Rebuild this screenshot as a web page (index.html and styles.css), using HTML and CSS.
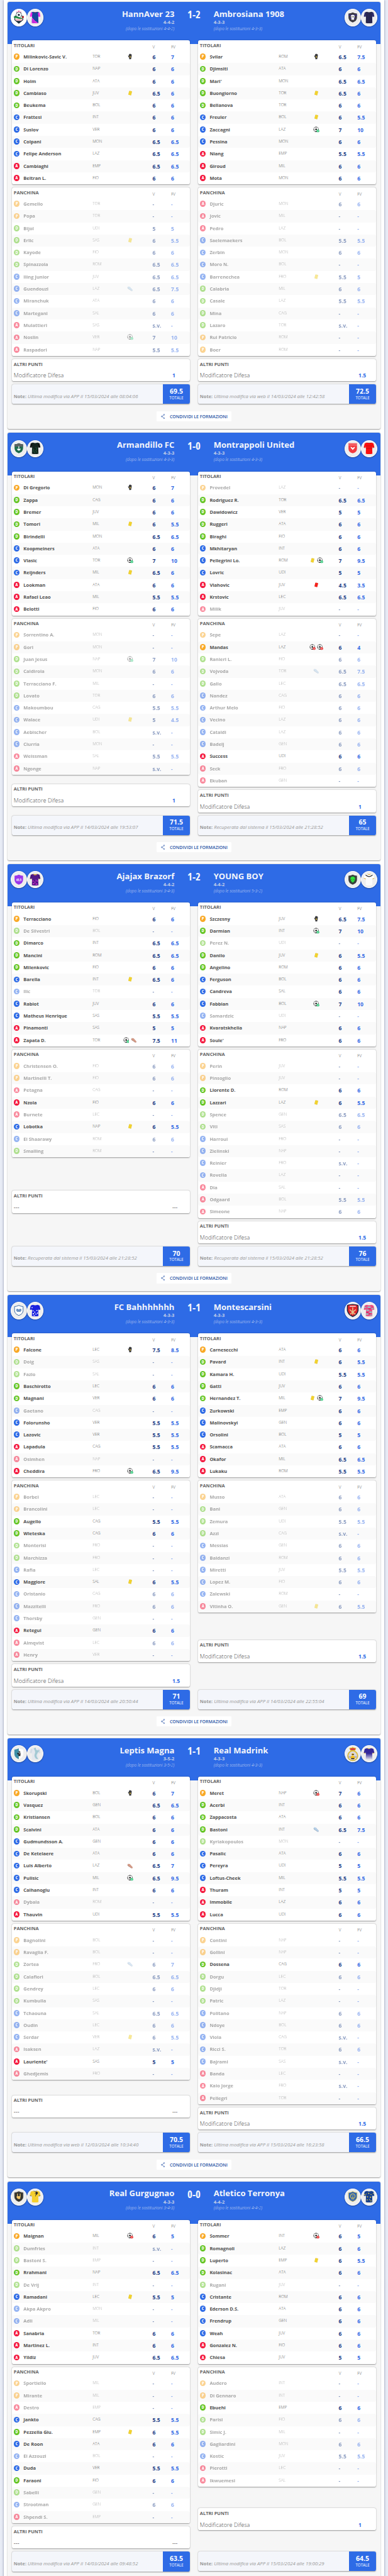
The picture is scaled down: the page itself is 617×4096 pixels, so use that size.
FILE: index.html
```html
<!DOCTYPE html>
<html lang="it">
<head>
<meta charset="utf-8">
<title>Formazioni</title>
<link rel="stylesheet" href="styles.css">
</head>
<body>
<svg class="defs" aria-hidden="true">
  <symbol id="glove" viewBox="0 0 16 16"><path d="M4 9 2.6 6.4c-.4-1 .8-1.6 1.4-.8l1 1.2-.3-4c0-1.100 1.400-1.200 1.600-.2l.6-1.400c.5-.9 1.600-.6 1.600.3l.5-.3c.8-.4 1.500 0 1.400.9l.3.2c.8-.2 1.300.4 1.200 1.200L11.500 8.500 10.500 12v2.500l-4.500.3-.5-3z" fill="#3a3a3c"/><circle cx="8" cy="8.800" r="1.700" fill="#e8c53a"/></symbol>
  <symbol id="yellow" viewBox="0 0 16 16"><rect x="4.300" y="2.700" width="7.400" height="10.600" rx="1.200" transform="rotate(13 8 8)" fill="#f2d22e"/></symbol>
  <symbol id="red" viewBox="0 0 16 16"><rect x="4.300" y="2.700" width="7.400" height="10.600" rx="1.200" transform="rotate(13 8 8)" fill="#f5221c"/></symbol>
  <symbol id="ball" viewBox="0 0 16 16"><circle cx="7.500" cy="7.500" r="6.300" fill="#fff" stroke="#333" stroke-width=".8"/><path d="m7.500 4.900 2.500 1.800-1 2.900H6L5 6.700zM4.700 1.800 7.500 3l2.800-1.200A6.500 6.500 0 0 0 4.700 1.800zM1.200 6.400 3 8l-.4 3A6.500 6.500 0 0 1 1.200 6.400zM13.800 6.400 12 8l.4 3a6.500 6.500 0 0 0 1.400-4.600zM5 13.500l1.200-1.700h2.600l1.200 1.700a6.500 6.500 0 0 1-5 0z" fill="#2b2b2b"/></symbol>
  <symbol id="goal" viewBox="0 0 16 16"><use href="#ball"/><circle cx="12.200" cy="11.500" r="3.500" fill="#3fcf85"/><path d="m10.600 11.600 1.200 1.100 2-2.300" fill="none" stroke="#fff" stroke-width="1"/></symbol>
  <symbol id="conceded" viewBox="0 0 16 16"><use href="#ball"/><circle cx="12.200" cy="11.500" r="3.500" fill="#ee2d2d"/><path d="m10.800 10.100 2.800 2.800m0-2.800-2.800 2.800" stroke="#fff" stroke-width="1"/></symbol>
  <symbol id="assist" viewBox="0 0 16 16"><path d="M1.500 4.500 3 2.500l1.800.9 2-.6 7.600 8.400-.3 2.300-2.300.2L6 9.700 2.600 7.800z" fill="#b4cfe8"/><path d="m1.600 4.700 1 3.200L6 9.800l5.800 4" fill="none" stroke="#7d97b0" stroke-width=".8"/></symbol>
  <symbol id="softassist" viewBox="0 0 16 16"><path d="M1.500 4.500 3 2.500l1.800.9 2-.6 7.600 8.400-.3 2.300-2.300.2L6 9.700 2.600 7.800z" fill="#d59a86"/><path d="m1.600 4.700 1 3.200L6 9.800l5.800 4" fill="none" stroke="#9b6656" stroke-width=".8"/></symbol>
  <symbol id="share" viewBox="0 0 12 16"><path d="M9.500 3 2.800 8l6.700 5" fill="none" stroke="#2f58a8" stroke-width="1.100"/><g fill="#b9c8e6" stroke="#2f58a8" stroke-width=".9"><circle cx="9.500" cy="2.600" r="1.800"/><circle cx="2.600" cy="8" r="1.800"/><circle cx="9.500" cy="13.400" r="1.800"/></g></symbol>
</svg>
<main class="page" id="matches"></main>
<script src="matches.js"></script>
</body>
</html>
```
FILE: styles.css
```css
/* 1rem = 10 design pixels */
html { font-size: 6.228px; }
* { box-sizing: border-box; }
body {
  margin: 0;
  height: 4096px;
  overflow: hidden;
  background: #e8ecf6;
  font-family: "Open Sans", "Noto Sans", sans-serif;
  color: #505050;
}
.defs { position: absolute; width: 0; height: 0; }
.page {
  display: flex;
  flex-direction: column;
  gap: 1rem;
  margin: 0 1rem;
  padding: .5rem 1rem 0;
  min-height: 4096px;
  background: #fff;
  box-shadow: 0 0 .5rem rgba(40, 50, 90, .55);
}

.match {
  flex: none;
  display: flex;
  flex-direction: column;
  border-radius: .5rem;
  background: #f6f6f6;
  box-shadow: 0 .1rem .3rem rgba(0, 0, 0, .4);
}
.match.last { padding-bottom: 3rem; }

.match-head {
  flex: none;
  display: grid;
  grid-template-columns: 1fr 10rem 1fr;
  height: 10.8rem;
  padding: 0 .8rem;
  border-radius: .5rem .5rem 0 0;
  background: #2e6be6;
  color: #f3f5fb;
}
.club { display: flex; justify-content: space-between; }
.club.away { flex-direction: row-reverse; }
.club.home .club-text { text-align: right; }
.club-text { padding-top: 1.6rem; white-space: nowrap; }
.club-name { font-size: 2.1rem; line-height: 2.9rem; font-weight: 700; }
.module { font-size: 1.2rem; line-height: 1.5rem; font-weight: 700; color: #c3cfe8; }
.module-after { margin-top: .1rem; font-size: 1.09rem; line-height: 1.6rem; font-style: italic; font-weight: 300; color: #d5def2; }
.score {
  padding-top: 1.3rem;
  text-align: center;
  font-size: 2.7rem;
  line-height: 3.8rem;
  font-weight: 700;
  font-stretch: 75%;
}
.badges { display: flex; padding-top: 1.8rem; }
.badge {
  width: 4.15rem;
  height: 4.4rem;
  border-radius: 50%;
  background: #eee;
  border: .2rem solid #fff;
  box-shadow: 0 .1rem .3rem rgba(0, 0, 0, .45);
  overflow: hidden;
}
.badge.white { background: #fff; }
.badge svg { display: block; width: 4.15rem; height: 4.4rem; margin: -.2rem; }

.teams {
  display: flex;
  gap: 2rem;
  margin-top: -1rem;
  padding: 0 1rem;
}
.team { flex: 1 1 0; min-width: 0; display: flex; flex-direction: column; gap: .8rem; }
.panel {
  flex: none;
  border-radius: .5rem;
  background: #fff;
  box-shadow: 0 .1rem .3rem rgba(0, 0, 0, .38);
}
.panel-title { font-size: 1.19rem; line-height: 1.8rem; font-weight: 700; color: #646464; white-space: nowrap; }
.line {
  display: grid;
  grid-template-columns: 2.5rem 17.65rem 6rem 9.3rem 4.75rem 1fr;
  padding-left: .5rem;
  height: 3.1rem;
  border-radius: .5rem;
}
.line.head { height: 2.7rem; padding-top: .4rem; grid-template-columns: 35.45rem 4.75rem 1fr; }
.col { font-size: 1.03rem; line-height: 2.5rem; font-weight: 300; }
.line:nth-child(odd) { background: #fafafa; }
.line.head:nth-child(odd) { background: none; }
.line.off > * { opacity: .5; }

.role {
  width: 1.55rem;
  height: 1.55rem;
  margin-top: .7rem;
  border-radius: 50%;
  color: #fff;
  font-size: 1.2rem;
  line-height: 1.55rem;
  font-weight: 700;
  font-stretch: 75%;
  text-align: center;
}
.role.P { background: #f9a825; }
.role.D { background: #64c524; }
.role.C { background: #2e6be6; }
.role.A { background: #f4173d; }
.player { font-size: 1.2rem; line-height: 3.1rem; font-weight: 700; white-space: nowrap; }
.side { font-size: 1.03rem; line-height: 2.75rem; font-weight: 300; }
.bonus { display: flex; justify-content: center; gap: .4rem; padding: .65rem 2.2rem 0 0; }
.bonus svg { flex: none; width: 1.6rem; height: 1.6rem; filter: drop-shadow(.1rem .1rem .1rem rgba(0, 0, 0, .2)); }
.vote { font-size: 1.37rem; line-height: 3.28rem; font-weight: 700; color: #1a3c85; }
.vote.final { color: #3068e4; }

.extra { margin: auto 0; height: 5.7rem; padding: .45rem 0 0 .5rem; }
.extra-line {
  display: grid;
  grid-template-columns: 40.5rem 1fr;
  padding-top: .9rem;
  font-size: 1.47rem;
  line-height: 2.2rem;
  font-weight: 300;
  white-space: nowrap;
}
.extra-line b { font-size: 1.37rem; font-weight: 700; color: #2e6be6; }
.extra-line.none { font-weight: 400; }
.extra-line.none b { font-weight: 400; color: #505050; }

.total { display: flex; height: 5rem; background: #f4f6fb; overflow: hidden; }
.note { flex: 1; padding: 2rem 0 0 .5rem; font-size: 1.25rem; line-height: 2.23rem; color: #999; white-space: nowrap; }
.note b { font-size: 1.19rem; }
.sum { width: 7rem; padding-top: .6rem; background: #2e6be6; color: #fff; text-align: center; font-size: 1rem; line-height: .8rem; }
.sum b { display: block; font-size: 1.68rem; line-height: 2.35rem; }

.share {
  flex: none;
  display: flex;
  align-items: center;
  align-self: center;
  gap: 1.2rem;
  width: 19.2rem;
  height: 2.6rem;
  margin: 1.8rem 0 2rem;
  padding-left: 1.2rem;
  border-radius: .2rem;
  background: #fff;
  color: #2a55a5;
  font-size: 1.13rem;
  font-weight: 600;
  white-space: nowrap;
}
.share svg { width: 1rem; height: 1.35rem; }
```
FILE: matches.js
```js
// Player line: role, name, club, vote, final vote, bonus icons.
// A leading "*" flips the default state (starters count, bench players do not).
const ICONS = { g: 'glove', y: 'yellow', r: 'red', b: 'goal', o: 'conceded', s: 'assist', t: 'softassist' };

const shirt = (fill, sleeve, extra = '') => `
  <path fill="${fill}" d="M15 7.500Q21 10 27 7.500L32 9.500 29 19l.5 17.300Q21 38 12.500 36.300L13 19 10 9.500Z"/>
  <path fill="${sleeve}" d="M12 8.600 9.500 10 7.300 19.500 12 21l2-9ZM30 8.600 32.500 10l2.200 9.500L30 21l-2-9Z"/>${extra}`;
const shield = (fill, extra = '', edge = 'none') => `
  <path fill="${fill}" stroke="${edge}" stroke-width="1.500" d="M10 12Q16 11.500 21 9q5 2.500 11 3v10q0 9-11 13-11-4-11-13Z"/>${extra}`;

const matches = [
  {
    score: '1-2',
    teams: [
      {
        name: 'HannAver 23', module: '4-4-2', after: '4-4-2', whiteLogo: true,
        logo: `<path d="m21 3.500.9 1.700 1.900.2-1.400 1.300.4 1.900-1.800-.9-1.800.9.4-1.900-1.400-1.300 1.900-.2zM16 6l.6 1h1.100l-.8.8.3 1.100-1.200-.5-1.100.5.2-1.100-.8-.8h1.100zM26 6l.6 1h1.100l-.8.8.3 1.100-1.200-.5-1.100.5.2-1.100-.8-.8h1.100z" fill="#ff5fa2"/>
          <path d="M11 19q10-4 20 0l.5 9L21 37l-10.500-9Z" fill="#efe9d6" stroke="#1c3040" stroke-width="1.800"/>
          <circle cx="21" cy="15.500" r="7" fill="#fff" stroke="#1c2c3c"/><path d="m21 12.500 3 2.200-1.200 3.300h-3.600L18 14.700zM15 12l3-3-1-.5-2.500 2zM27 12l-3-3 1-.5 2.500 2z" fill="#1c2c3c"/>
          <path d="M7.500 20q7-3 13 1 4 3 9 2v2.500q-8 1-12-1-4-2-8-.5Z" fill="#1f8a43"/><path d="M29 20l5-2v5l-4 1.500z" fill="#b6242e"/><path d="M13 27h16v3H13z" fill="#f29ab5"/><path d="M13 31h16l-8 6z" fill="#1c3040"/>`,
        shirt: shirt('#17479e', '#f12bea', '<path fill="#f12bea" d="M12.800 22Q19 31 29 36.500 21 38 12.500 36.300Z"/><path d="M13 27q5 6 9 10M13 31q3 4 5 6" stroke="#17479e" stroke-width=".8" fill="none"/><path d="M17 7.500q4 3 8 0l-1 2.500h-6z" fill="#7c1d4b"/>'),
        starters: `P,Milinkovic-Savic V.,TOR,6,7,g
D,Di Lorenzo,NAP,6,6
D,Holm,ATA,6,6
D,Cambiaso,JUV,6.5,6,y
D,Beukema,BOL,6,6
C,Frattesi,INT,6,6
C,Suslov,VER,6,6
C,Colpani,MON,6.5,6.5
C,Felipe Anderson,LAZ,6.5,6.5
A,Cambiaghi,EMP,6.5,6.5
A,Beltran L.,FIO,6,6`,
        bench: `P,Gemello,TOR,-,-
P,Popa,TOR,-,-
D,Bijol,UDI,5,5
D,Erlic,SAS,6,5.5,y
D,Kayode,FIO,6,6
D,Spinazzola,ROM,6.5,6.5
C,Iling Junior,JUV,6.5,6.5
C,Guendouzi,LAZ,6.5,7.5,s
C,Miranchuk,ATA,6,6
C,Martegani,SAL,6,6
A,Mulattieri,SAS,s.v.,-
A,Noslin,VER,7,10,b
A,Raspadori,NAP,5.5,5.5`,
        modifier: '1', total: '69.5', note: 'Ultima modifica via APP il 15/03/2024 alle 08:04:06'
      },
      {
        name: 'Ambrosiana 1908', module: '4-3-3', after: '4-3-3',
        logo: shield('#3c3a42', '<path d="M10 15h22v3H10zM14 23h14v3H14z" fill="#39328a"/><path d="M16.500 17q4.500-4 9 0 1.500 5-1 7v4h-7v-4q-2.500-2-1-7Z" fill="#f4f4f4"/><circle cx="19" cy="20.500" r="1.300" fill="#333"/><circle cx="23" cy="20.500" r="1.300" fill="#333"/>'),
        shirt: shirt('#23233d', '#2d2a66', '<path d="M16 9v27M20 10v27M24 10v27M28 9v27" stroke="#34317a" stroke-width="1.300"/>'),
        starters: `P,Svilar,ROM,6.5,7.5,g
D,Djimsiti,ATA,6,6
D,Mari',MON,6.5,6.5
D,Buongiorno,TOR,6.5,6,y
D,Bellanova,TOR,6,6
C,Freuler,BOL,6,5.5,y
C,Zaccagni,LAZ,7,10,b
C,Pessina,MON,6,6
A,Niang,EMP,5.5,5.5
A,Giroud,MIL,6,6
A,Mota,MON,6,6`,
        bench: `A,Djuric,MON,6,6
A,Jovic,MIL,-,-
A,Pedro,LAZ,-,-
C,Saelemaekers,BOL,5.5,5.5
C,Zerbin,MON,6,6
C,Moro N.,BOL,-,-
C,Barrenechea,FRO,5.5,5,y
D,Calabria,MIL,6,6
D,Casale,LAZ,5.5,5.5
D,Mina,CAG,-,-
D,Lazaro,TOR,s.v.,-
P,Rui Patricio,ROM,-,-
P,Boer,ROM,-,-`,
        modifier: '1.5', total: '72.5', note: 'Ultima modifica via web il 14/03/2024 alle 12:42:58'
      }
    ]
  },
  {
    score: '1-0',
    teams: [
      {
        name: 'Armandillo FC', module: '4-3-3', after: '4-3-3',
        logo: shield('#1d6b4c', '<path d="M10 12Q16 11.500 21 9q5 2.500 11 3v6H10Z" fill="#5c6264"/><path d="M20 17h2v7l4-1q-1 5-5 5t-5-5l4 1z" fill="#fff"/>'),
        shirt: shirt('#15251e', '#101412', '<path d="M14 22l4 4-3 5M22 19l4 5-4 4 5 6M18 30l3 5" stroke="#1f6a41" stroke-width="1.400" fill="none"/>'),
        starters: `P,Di Gregorio,MON,6,7,g
D,Zappa,CAG,6,6
D,Bremer,JUV,6,6
D,Tomori,MIL,6,5.5,y
D,Birindelli,MON,6.5,6.5
C,Koopmeiners,ATA,6,6
C,Vlasic,TOR,7,10,b
C,Reijnders,MIL,6.5,6,y
A,Lookman,ATA,6,6
A,Rafael Leao,MIL,5.5,5.5
A,Belotti,FIO,6,6`,
        bench: `P,Sorrentino A.,MON,-,-
P,Gori,MON,-,-
D,Juan Jesus,NAP,7,10,b
D,Caldirola,MON,6,6
D,Terracciano F.,MIL,-,-
D,Lovato,TOR,6,6
C,Makoumbou,CAG,5.5,5.5
C,Walace,UDI,5,4.5,y
C,Aebischer,BOL,s.v.,-
C,Ciurria,MON,-,-
A,Weissman,SAL,5.5,5.5
A,Ngonge,NAP,s.v.,-`,
        modifier: '1', total: '71.5', note: 'Ultima modifica via APP il 14/03/2024 alle 19:53:07'
      },
      {
        name: 'Montrappoli United', module: '4-3-3', after: '4-3-3',
        logo: '<path d="M10 9h22v14q0 10-11 12-11-2-11-12Z" fill="#f23a40"/><path d="M10 9h22v7H10Z" fill="#fff" opacity=".18"/><path d="M15 18.500q4 0 6 3 2-3 6-3-1 4-4 5.500L21 27l-2-3q-3-1.500-4-5.500Z" fill="#fff"/>',
        shirt: shirt('#fa0f0f', '#fa0f0f', '<path d="M13 16h16M13 22h16M7.500 20l4.500 1.300M34.500 20 30 21.300" stroke="#9c1010" stroke-width=".9"/><path d="M17 7.500q4 2.500 8 0l-1 2h-6z" fill="#a01414"/>'),
        starters: `*P,Provedel,LAZ,-,-
D,Rodriguez R.,TOR,6.5,6.5
D,Dawidowicz,VER,5,5
D,Ruggeri,ATA,6,6
D,Biraghi,FIO,6,6
C,Mkhitaryan,INT,6,6
C,Pellegrini Lo.,ROM,7,9.5,yb
C,Lovric,UDI,5,5
A,Vlahovic,JUV,4.5,3.5,r
A,Krstovic,LEC,6.5,6.5
*A,Milik,JUV,-,-`,
        bench: `P,Sepe,LAZ,-,-
*P,Mandas,LAZ,6,4,oo
D,Ranieri L.,FIO,6,6
D,Vojvoda,TOR,6.5,7.5,s
D,Gallo,LEC,6.5,6.5
C,Nandez,CAG,6,6
C,Arthur Melo,FIO,6,6
C,Vecino,LAZ,6,6
C,Cataldi,LAZ,6,6
C,Badelj,GEN,6,6
*A,Success,UDI,6,6
A,Seck,FRO,6,6
A,Ekuban,GEN,-,-`,
        modifier: '1', total: '65', note: 'Recuperata dal sistema il 15/03/2024 alle 21:28:52'
      }
    ]
  },
  {
    score: '1-2',
    teams: [
      {
        name: 'Ajajax Brazorf', module: '4-4-2', after: '3-4-3',
        logo: shield('#9b35ea', '<text x="21" y="25" font-size="9" font-weight="700" text-anchor="middle" textLength="13" lengthAdjust="spacingAndGlyphs" fill="#fff">65,5</text>'),
        shirt: shirt('#54198a', '#4a1779', '<path d="M14 24h3v3h-3zM19 27h3v3h-3zM25 24h3v3h-3zM15 31h4v3h-4zM22 32h5v3h-5zM22 22h2v3h-2z" fill="#d42bc8"/><path d="M17 7.500q4 3 8 0l-1 2.500h-6zM7.500 19.500l4.500 1.500M34.500 19.500 30 21" fill="#e3b13a" stroke="#e3b13a"/>'),
        starters: `P,Terracciano,FIO,6,6
*D,De Silvestri,BOL,-,-
D,Dimarco,INT,6.5,6.5
D,Mancini,ROM,6.5,6.5
D,Milenkovic,FIO,6,6
C,Barella,INT,6.5,6,y
*C,Ilic,TOR,-,-
C,Rabiot,JUV,6,6
C,Matheus Henrique,SAS,5.5,5.5
A,Pinamonti,SAS,5,5
A,Zapata D.,TOR,7.5,11,bt`,
        bench: `P,Christensen O.,FIO,6,6
P,Martinelli T.,FIO,6,6
A,Petagna,CAG,-,-
*A,Nzola,FIO,6,6
A,Burnete,LEC,-,-
*C,Lobotka,NAP,6,5.5,y
C,El Shaarawy,ROM,6,6
D,Smalling,ROM,-,-`,
        total: '70', note: 'Recuperata dal sistema il 15/03/2024 alle 21:28:52'
      },
      {
        name: 'YOUNG BOY', module: '4-4-2', after: '5-3-2',
        logo: shield('#39413d', '<path d="M21 14q6 0 6 6 0 5-6 10-6-5-6-10 0-6 6-6Z" fill="#2ee03c"/><path d="m17 20 3.200 3.500q-3 0-3.200-3.500ZM25 20l-3.200 3.500q3 0 3.200-3.500Z" fill="#16351a"/>'),
        shirt: shirt('#fbfbfb', '#fff', '<path d="M12 10q9 8 18 0" fill="none" stroke="#333" stroke-width="2"/><path d="M7.500 18.500l5 1.500M34.500 18.500 30 20M17 7.500q4 3 8 0" stroke="#dcae2f" stroke-width="1.600" fill="none"/>'),
        starters: `P,Szczesny,JUV,6.5,7.5,g
D,Darmian,INT,7,10,b
*D,Perez N.,UDI,-,-
D,Danilo,JUV,6,5.5,y
D,Angelino,ROM,6,6
C,Ferguson,BOL,6,6
C,Candreva,SAL,6,6
C,Fabbian,BOL,7,10,b
*C,Samardzic,UDI,-,-
A,Kvaratskhelia,NAP,6,6
A,Soule',FRO,6,6`,
        bench: `P,Perin,JUV,-,-
P,Pinsoglio,JUV,-,-
*D,Llorente D.,ROM,6,6
*D,Lazzari,LAZ,6,5.5,y
D,Spence,GEN,6.5,6.5
D,Viti,SAS,6,6
C,Harroui,FRO,-,-
C,Zielinski,NAP,-,-
C,Reinier,FRO,s.v.,-
C,Rovella,LAZ,-,-
A,Dia,SAL,-,-
A,Odgaard,BOL,5.5,5.5
A,Simeone,NAP,6,6`,
        modifier: '1.5', total: '76', note: 'Recuperata dal sistema il 15/03/2024 alle 21:28:52'
      }
    ]
  },
  {
    score: '1-1',
    teams: [
      {
        name: 'FC Bahhhhhhh', module: '4-3-3', after: '4-3-3',
        logo: shield('#fff', '<path d="M15 19q3-2 5.500 1v5q-4 1-5.500-2zM27 19q-3-2-5.500 1v5q4 1 5.500-2z" fill="#6f97c4" stroke="#2b5f9e" stroke-width=".7"/>', '#2b5f9e'),
        shirt: shirt('#1a22e0', '#1820d8', '<path d="M14 22h3v2h-3zM19 25h2v3h-2zM24 21h3v2h-3zM15 29h3v3h-3zM22 30h2v3h-2zM26 27h2v4h-2zM17 34h3v2h-3zM12 13h2v3h-2z" fill="#fff"/>'),
        starters: `P,Falcone,LEC,7.5,8.5,g
*D,Doig,SAS,-,-
*D,Fazio,SAL,-,-
D,Baschirotto,LEC,6,6
D,Magnani,VER,6,6
*C,Gaetano,CAG,-,-
C,Folorunsho,VER,5.5,5.5
C,Lazovic,VER,5.5,5.5
A,Lapadula,CAG,5.5,5.5
*A,Osimhen,NAP,-,-
A,Cheddira,FRO,6.5,9.5,b`,
        bench: `P,Borbei,LEC,-,-
P,Brancolini,LEC,-,-
*D,Augello,CAG,5.5,5.5
*D,Wieteska,CAG,6,6
D,Monterisi,FRO,-,-
D,Marchizza,FRO,-,-
C,Rafia,LEC,-,-
*C,Maggiore,SAL,6,5.5,y
C,Oristanio,CAG,6,6
C,Mazzitelli,FRO,6,6
C,Thorsby,GEN,-,-
*A,Retegui,GEN,6,6
A,Almqvist,LEC,6,6
A,Henry,VER,-,-`,
        modifier: '1.5', total: '71', note: 'Ultima modifica via APP il 14/03/2024 alle 20:50:44'
      },
      {
        name: 'Montescarsini', module: '4-3-3', after: '4-3-3',
        logo: '<path d="M6 8Q21 3 36 8v14q-2 12-15 17Q8 34 6 22Z" fill="#1c2340"/><path d="M8.500 9.500Q21 5.500 33.500 9.500V22Q31.500 32 21 36.500 10.500 32 8.500 22Z" fill="#e0262b"/><path d="M13 11.500h16" stroke="#fff" stroke-width="2"/><path d="M21 14v19M13 20l15 12M29 20 14 32" stroke="#e5c58b" stroke-width="2.500"/>',
        shirt: shirt('#e94f86', '#e04b80', '<path d="M8 13h6v2H8zM17 12h8v3h-8zM27 16h6v2h-6zM14 20h7v3h-7zM22 25h7v3h-7zM13 30h6v3h-6zM22 33h7v2h-7z" fill="#8bcfc9"/><path d="M19 17h6v2h-6zM14 26h5v2h-5zM20 30h5v2h-5z" fill="#c01850"/>'),
        starters: `P,Carnesecchi,ATA,6,6
D,Pavard,INT,6,5.5,y
D,Kamara H.,UDI,5.5,5.5
D,Gatti,JUV,6,6
D,Hernandez T.,MIL,7,9.5,yb
C,Zurkowski,EMP,6,6
C,Malinovskyi,GEN,6,6
C,Orsolini,BOL,5,5
A,Scamacca,ATA,6,6
A,Okafor,MIL,6.5,6.5
A,Lukaku,ROM,5.5,5.5`,
        bench: `P,Musso,ATA,6,6
D,Bani,GEN,6,6
D,Zemura,UDI,5.5,5.5
D,Azzi,CAG,s.v.,-
C,Messias,GEN,6,6
C,Baldanzi,ROM,6,6
C,Miretti,JUV,5.5,5.5
C,Lopez M.,FIO,6,6
C,Zalewski,ROM,-,-
A,Vitinha O.,GEN,6,5.5,y`,
        modifier: '1.5', total: '69', note: 'Ultima modifica via APP il 14/03/2024 alle 22:55:04'
      }
    ]
  },
  {
    score: '1-1',
    teams: [
      {
        name: 'Leptis Magna', module: '3-5-2', after: '3-5-2',
        logo: '<path d="M9.500 11Q16 10.500 21 8v28Q9.500 31 9.500 22Z" fill="#3d8da6"/><path d="M32.500 11Q26 10.500 21 8v28Q32.500 31 32.500 22Z" fill="#fff"/><path d="M20 16q4-1 4 2t-5 2q-3 2 1 3t5-2q0 5-5 5 4 2 5 0" fill="none" stroke="#1b1b1b" stroke-width="1.800"/>',
        shirt: shirt('#e3e7ee', '#d5dde6', '<path d="M17 8q6 8 3 14-3 8 4 13l5 1-3-5q-3-5 0-9 3-6 7-9-6 1-9-1-2-3-1-6Z" fill="#a3c9d3"/>'),
        starters: `P,Skorupski,BOL,6,7,g
D,Vasquez,GEN,6.5,6.5
D,Kristiansen,BOL,6,6
D,Scalvini,ATA,6,6
C,Gudmundsson A.,GEN,6,6
C,De Ketelaere,ATA,6,6
C,Luis Alberto,LAZ,6.5,7,t
C,Pulisic,MIL,6.5,9.5,b
C,Calhanoglu,INT,6,6
*A,Dybala,ROM,-,-
A,Thauvin,UDI,5.5,5.5`,
        bench: `P,Bagnolini,BOL,-,-
P,Ravaglia F.,BOL,-,-
D,Zortea,FRO,6,7,s
D,Calafiori,BOL,6.5,6.5
D,Gendrey,LEC,6,6
D,Kumbulla,SAS,-,-
C,Tchaouna,SAL,6.5,6.5
C,Oudin,LEC,6,6
C,Serdar,VER,6,5.5,y
A,Isaksen,LAZ,s.v.,-
*A,Lauriente',SAS,5,5
A,Ghedjemis,FRO,-,-`,
        total: '70.5', note: 'Ultima modifica via web il 12/03/2024 alle 10:34:40'
      },
      {
        name: 'Real Madrink', module: '4-3-3', after: '4-3-3',
        logo: '<path d="M12 8q3-3 7-2l2-2.500L23 6q4-1 7 2l-3 6H15Z" fill="#e8c22b"/><path d="M14 8.500q7-2 14 0l-1.500 3.500h-11Z" fill="#d12c46"/><circle cx="21" cy="27" r="12.500" fill="#d9d7dc" stroke="#e8c22b" stroke-width="2.500"/><circle cx="21" cy="27" r="13.600" fill="none" stroke="#8d8a5e" stroke-width=".5"/><path d="M10 30h22" stroke="#9fa3c4" stroke-width="3"/><circle cx="21" cy="23.500" r="3" fill="#f0b618"/><path d="M15 34q0-7 6-7t6 7q-6 4-12 0Z" fill="#f5c11d"/><path d="M19 22.500h5v2h-5zM17 33h8v3h-8z" fill="#2c2c34"/>',
        shirt: `<linearGradient id="fade" x1="0" y1="0" x2="0" y2="1"><stop offset=".45" stop-color="#33279a"/><stop offset="1" stop-color="#e8e8ee"/></linearGradient>` + shirt('url(#fade)', '#33279a', '<path d="M17 7.500q4 3 8 0M7.500 19.500l4.500 1.500M34.500 19.500 30 21" fill="none" stroke="#e0b32d" stroke-width="1.400"/>'),
        starters: `P,Meret,NAP,7,6,o
D,Acerbi,INT,6,6
D,Zappacosta,ATA,6,6
D,Bastoni,INT,6.5,7.5,s
*D,Kyriakopoulos,MON,-,-
C,Pasalic,ATA,6,6
C,Pereyra,UDI,5,5
C,Loftus-Cheek,MIL,5.5,5.5
A,Thuram,INT,5,5
A,Immobile,LAZ,6,6
A,Lucca,UDI,6,6`,
        bench: `P,Contini,NAP,-,-
P,Gollini,NAP,-,-
*D,Dossena,CAG,6,6
D,Dorgu,LEC,6,6
D,Djidji,TOR,-,-
D,Patric,LAZ,-,-
C,Politano,NAP,6,6
C,Ndoye,BOL,6,6
C,Viola,CAG,s.v.,-
C,Ricci S.,TOR,6,6
C,Bajrami,SAS,s.v.,-
A,Banda,LEC,-,-
A,Kaio Jorge,FRO,s.v.,-
A,Pellegri,TOR,-,-`,
        modifier: '1.5', total: '66.5', note: 'Ultima modifica via APP il 15/03/2024 alle 16:23:58'
      }
    ]
  },
  {
    score: '0-0', last: true,
    teams: [
      {
        name: 'Real Gurgugnao', module: '4-3-3', after: '3-4-3',
        logo: shield('#33332f', '<path d="M17.500 15v8M24.500 15v6" stroke="#f3c766" stroke-width="2" stroke-linecap="round"/><path d="M16.500 21h9l-1 7h-6l-4-5Z" fill="#f3c766"/>', '#57544a'),
        shirt: shirt('#f6cf2e', '#f3c92a', '<path d="M24 9q5 1 4 5l-4 4 2-4-5 9 2-10-4 2Z" fill="#2b2b2b"/><path d="M17 7.500q4 3 8 0M7.500 19.500l4.500 1.500M34.500 19.500 30 21" fill="none" stroke="#2b2b2b"/>'),
        starters: `P,Maignan,MIL,6,5,o
*D,Dumfries,INT,s.v.,-
*D,Bastoni S.,EMP,-,-
D,Rrahmani,NAP,6.5,6.5
*D,De Vrij,INT,-,-
C,Ramadani,LEC,5.5,5,y
*C,Akpa Akpro,MON,-,-
*C,Adli,MIL,-,-
A,Sanabria,TOR,6,6
A,Martinez L.,INT,6,6
A,Yildiz,JUV,6.5,6.5`,
        bench: `P,Sportiello,MIL,-,-
P,Mirante,MIL,-,-
A,Destro,EMP,-,-
*C,Jankto,CAG,5.5,5.5
*D,Pezzella Giu.,EMP,6,5.5,y
*C,De Roon,ATA,6,6
C,El Azzouzi,BOL,-,-
*C,Duda,VER,5.5,5.5
*D,Faraoni,FIO,6,6
D,Sabelli,GEN,-,-
C,Strootman,GEN,6,6
A,Shpendi S.,EMP,-,-`,
        total: '63.5', note: 'Ultima modifica via APP il 14/03/2024 alle 09:48:52'
      },
      {
        name: 'Atletico Terronya', module: '4-4-2', after: '4-4-2',
        logo: shield('#2a61b5', '<circle cx="21" cy="21" r="6" fill="none" stroke="#d9c35b" stroke-width="1.800"/><path d="M18 19.500h2M22 19.500h2M21 20v4M18.500 25h5M17 28l4 3 4-3" stroke="#d9c35b" stroke-width="1.200" fill="none"/>', '#d9c35b'),
        shirt: shirt('#17408c', '#17408c', '<path d="M12 14l3 1-1 2zM18 12l4 1-2 3zM25 15l3 2-3 1zM15 21l4 1-2 3zM23 22l4 1-3 3zM15 29l3 1-2 3zM21 28l3 2-2 2zM25 31l3 2-3 2zM8 16h3v2H8zM31 12l2 2-2 2z" fill="#f1cd35"/>'),
        starters: `P,Sommer,INT,6,5,o
D,Romagnoli,LAZ,6,6
D,Luperto,EMP,6,5.5,y
D,Kolasinac,ATA,6,6
*D,Rugani,JUV,-,-
C,Cristante,ROM,6,6
C,Ederson D.S.,ATA,6,6
C,Frendrup,GEN,6,6
C,Weah,JUV,6,6
A,Gonzalez N.,FIO,6,6
A,Chiesa,JUV,5,5`,
        bench: `P,Audero,INT,-,-
P,Di Gennaro,INT,-,-
*D,Ebuehi,EMP,6,6
D,Parisi,FIO,6,6
D,Simic J.,MIL,-,-
C,Gagliardini,MON,6,6
C,Kostic,JUV,5.5,5.5
A,Pierotti,LEC,-,-
A,Ikwuemesi,SAL,-,-`,
        modifier: '1', total: '64.5', note: 'Ultima modifica via APP il 15/03/2024 alle 19:00:29'
      }
    ]
  }
];

const line = (text, bench) => {
  const flipped = text[0] === '*';
  const [role, name, side, vote, final, bonus = ''] = text.replace('*', '').split(',');
  const icons = [...bonus].map(c => `<svg><use href="#${ICONS[c]}"/></svg>`).join('');
  return `<div class="line${flipped !== bench ? ' off' : ''}">
    <div class="role ${role}">${role}</div><div class="player">${name}</div><div class="side">${side}</div>
    <div class="bonus">${icons}</div><div class="vote">${vote}</div><div class="vote final">${final}</div></div>`;
};

const list = (title, lines, bench) => `<section class="panel">
  <div class="line head"><div class="panel-title">${title}</div><div class="col">V</div><div class="col">FV</div></div>
  ${lines.split('\n').map(l => line(l, bench)).join('')}</section>`;

const badge = (art, white) => `<div class="badge${white ? ' white' : ''}"><svg viewBox="0 0 42 44">${art}</svg></div>`;

const club = (t, place) => `<div class="club ${place}">
  <div class="badges">${badge(t.logo, t.whiteLogo)}${badge(t.shirt)}</div>
  <div class="club-text"><div class="club-name">${t.name}</div><div class="module">${t.module}</div>
  <div class="module-after">(dopo le sostituzioni ${t.after})</div></div></div>`;

const team = t => `<div class="team">
  ${list('TITOLARI', t.starters, false)}${list('PANCHINA', t.bench, true)}
  <section class="panel extra"><div class="panel-title">ALTRI PUNTI</div>
    <div class="extra-line${t.modifier ? '' : ' none'}"><span>${t.modifier ? 'Modificatore Difesa' : '---'}</span><b>${t.modifier || '---'}</b></div></section>
  <section class="panel total"><div class="note"><b>Note:</b> <i>${t.note}</i></div><div class="sum"><b>${t.total}</b>TOTALE</div></section>
</div>`;

const share = '<div class="share"><svg><use href="#share"/></svg>CONDIVIDI LE FORMAZIONI</div>';

document.getElementById('matches').innerHTML = matches.map(m => `<article class="match${m.last ? ' last' : ''}">
  <header class="match-head">${club(m.teams[0], 'home')}<div class="score">${m.score}</div>${club(m.teams[1], 'away')}</header>
  <div class="teams">${m.teams.map(team).join('')}</div>${m.last ? '' : share}</article>`).join('');
```
